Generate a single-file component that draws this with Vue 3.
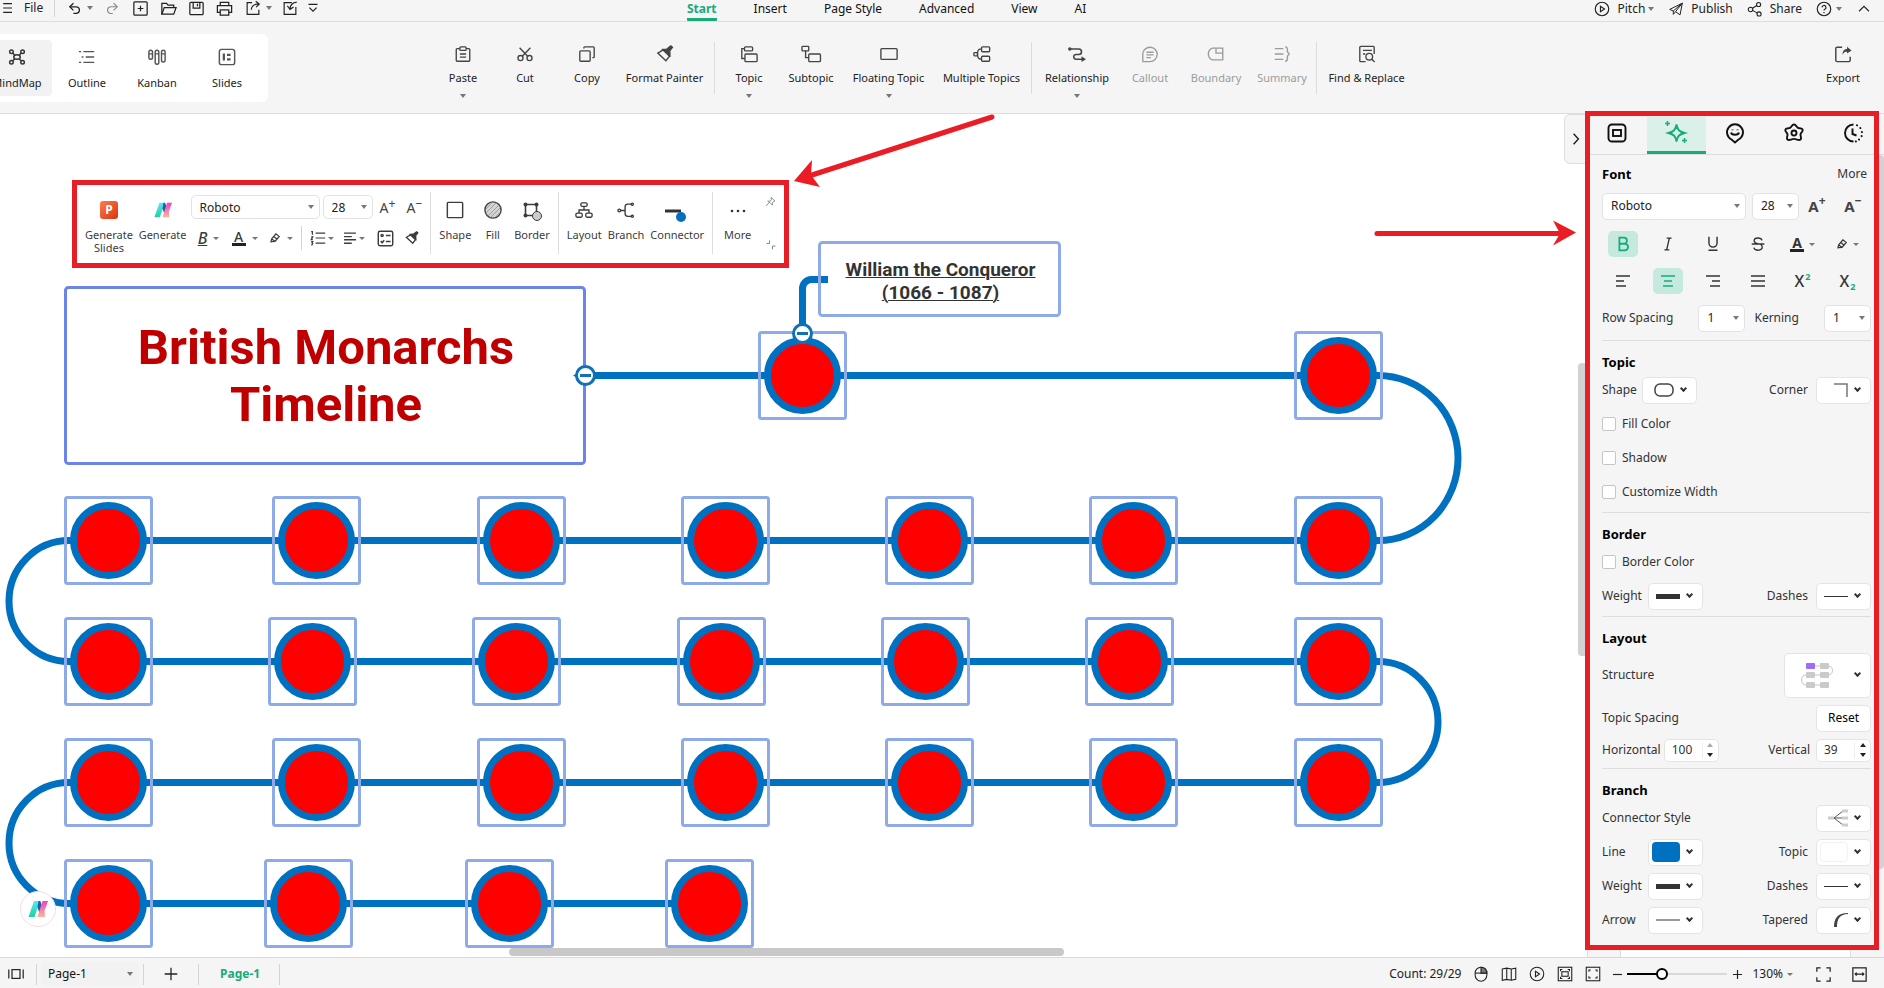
<script setup>
import { h, ref } from 'vue'

const shapes = {
  menu: '<path d="M4 4.500h11M4 10h11M4 15.500h11"/>',
  undo: '<path d="M8 4L3.500 8.500L8 13"/><path d="M3.500 8.500h8.500a4.200 4.200 0 0 1 0 8.300h-4"/>',
  redo: '<path d="M12 4L16.500 8.500L12 13"/><path d="M16.500 8.500H8a4.200 4.200 0 0 0 0 8.300h3"/>',
  plusBox: '<rect x="3" y="3" width="14" height="14" rx="1"/><path d="M10 7v6M7 10h6"/>',
  folder: '<path d="M3 16V4.500h5l1.500 2h6V9"/><path d="M3 16L5.500 9H18l-2.500 7z"/>',
  save: '<rect x="3" y="3.500" width="14" height="13" rx="1"/><path d="M6.500 3.500v6h7v-6M11 5v2.500"/>',
  print: '<path d="M5.500 7V3.500h9V7M5.500 14H2.500V7h15v7h-3"/><rect x="5.500" y="11.500" width="9" height="5.500"/>',
  shareBox: '<path d="M9 4H3.500v13h13v-5"/><path d="M8 12c.5-4.500 3-6.500 8.500-6.500M13 2.500l4 3-3.500 3.500"/>',
  importBox: '<path d="M12 4H3.500v13h13V9"/><path d="M17.500 3.500c-4.500.5-7 3-7.500 7M7 7.500l3 4 4-2.500"/>',
  customize: '<path d="M5 6h10M6 9.500l4 4 4-4"/>',
  play: '<circle cx="10" cy="10" r="7.500"/><path d="M8.300 7v6l4.500-3z"/>',
  plane: '<path d="M3 10.500L17 3.500l-2.500 13-5-3.500-2.500 3V12.200zM7 12.200L17 3.500l-7.500 9.500"/>',
  shareNodes: '<circle cx="5" cy="10.500" r="2.500"/><circle cx="14" cy="5" r="2.300"/><circle cx="14.500" cy="15.500" r="2.300"/><path d="M7.200 9.200L12 6.200M7.300 11.500l5 2.800"/>',
  help: '<circle cx="10" cy="10" r="7.500"/><path d="M7.800 8.200a2.200 2.200 0 1 1 3.200 2c-.8.400-1 .8-1 1.600M10 13.300v1.300"/>',
  up: '<path d="M4.500 12.500L10 7l5.500 5.500"/>',
  right: '<path d="M7 3.500l6 6.500-6 6.500"/>',
  mindmap: '<ellipse cx="10" cy="10" rx="3.600" ry="2.600"/><circle cx="3.800" cy="4.200" r="2"/><circle cx="16.200" cy="4.200" r="2"/><circle cx="3.800" cy="15.800" r="2"/><circle cx="16.200" cy="15.800" r="2"/><path d="M5.200 5.600L7.500 8M14.800 5.600L12.500 8M5.200 14.400L7.500 12M14.800 14.400L12.500 12"/>',
  outline: '<path d="M1 4h2.500M6 4h12M4 10h2M8.500 10H18M1 16h2.500M6 16h12"/>',
  kanban: '<rect x="1" y="2.500" width="4" height="10" rx="2"/><rect x="8" y="2.500" width="4" height="15.500" rx="2"/><rect x="15" y="2.500" width="4" height="13" rx="2"/><path d="M1 6.500h4M8 6.500h4M15 6.500h4"/>',
  slides: '<rect x="1.500" y="1.500" width="17" height="17" rx="2.500"/><path d="M6.500 6v8M10 7.500h4M10 12.500h4" stroke-width="2.500"/>',
  paste: '<path d="M6.500 4H3.500a1 1 0 0 0-1 1v12a1 1 0 0 0 1 1h13a1 1 0 0 0 1-1V5a1 1 0 0 0-1-1h-3"/><rect x="6.500" y="2" width="7" height="4" rx="1"/><path d="M6.500 10h7M6.500 13.500h7"/>',
  cut: '<circle cx="5" cy="14.500" r="2.800"/><circle cx="15" cy="14.500" r="2.800"/><path d="M7 12.500L16 3M13 12.500L4 3"/>',
  copy: '<rect x="2" y="6.500" width="11.500" height="11.500" rx="1"/><path d="M6.500 4V3a1 1 0 0 1 1-1h9.500a1 1 0 0 1 1 1v10a1 1 0 0 1-1 1h-1"/>',
  painter: '<path d="M8 5.500L2 9l9 8.500 4-5z"/><path d="M7.500 5L12 4.500l4.500-3.500 1.800 1.600-3 4L15.500 12z" fill="currentColor"/>',
  topic: '<rect x="5" y="2" width="9" height="4.500" rx="1"/><rect x="5.500" y="10" width="13.500" height="8.500" rx="1"/><path d="M5 4H2v11h3.500"/>',
  subtopic: '<rect x="0" y="1.500" width="7.500" height="5" rx=".8"/><rect x="7.500" y="10" width="13" height="8.500" rx="1"/><path d="M4 6.500V14h3.500"/>',
  floating: '<rect x="1" y="4" width="18" height="12" rx="1"/>',
  multi: '<rect x="9.500" y="2" width="9" height="5.500" rx="1"/><rect x="9.500" y="12.500" width="9" height="5.500" rx="1"/><rect x="1" y="8.500" width="4" height="3.500" rx=".8"/><path d="M9.500 4.500H8c-1.500 0-3 2-3 5.500s1.500 5.500 3 5.500h1.500"/>',
  relation: '<path d="M1.500 4.500H12a3 3 0 0 1 0 6H8.500a2.700 2.700 0 0 0 0 5.300H16" stroke-width="1.800"/><circle cx="2" cy="4.500" r="1.900" fill="currentColor" stroke="none"/><path d="M15 12.500L20 15.800L15 19z" fill="currentColor" stroke="none"/>',
  callout: '<path d="M2 18.500V10a8 8 0 1 1 8 8.500z"/><path d="M6 8h8M6 11h8M6 14h5"/>',
  boundary: '<path d="M6 3.500h11.500v13H6C3 15.500 1.500 13 1.500 10S3 4.500 6 3.500z"/><path d="M10 3.500v5.500h7.500"/>',
  summary: '<path d="M2 4h9.500M2 10h9.500M2 16h9.500M13.500 2c2 0 2.500 1 2.500 3v2.500L18 10l-2 2.500V15c0 2-.5 3-2.500 3"/>',
  find: '<path d="M8.500 18.500H3a1 1 0 0 1-1-1V2.500a1 1 0 0 1 1-1h14a1 1 0 0 1 1 1V10M5.500 6h10M5.500 10H8"/><circle cx="12.500" cy="13" r="3.700"/><path d="M15.300 15.800L18.500 19"/>',
  export: '<path d="M9 2.500H3.500a1.500 1.500 0 0 0-1.500 1.500v13a1.500 1.500 0 0 0 1.500 1.500h13a1.500 1.500 0 0 0 1.500-1.500v-4"/><path d="M9.500 11c0-5 2.500-6.500 5-6.500V2l5 4-5 3.500V7.500c-2 0-4 .5-5 3.500z" fill="currentColor" stroke="none"/>',
  tabFrame: '<rect x="1.500" y="1.500" width="17" height="17" rx="3.500"/><rect x="6" y="7" width="8" height="6"/>',
  tabStyle: '<path d="M10.500 1.500c1 5.500 2.500 7 8 8.500-5.500 1.500-7 3-8 8.500-1-5.500-2.500-7-8-8.500 5.500-1.500 7-3 8-8.500z"/><path d="M1.500-2v5M-1 .5h5M18.500 15v5M16 17.500h5" stroke-width="1.500"/>',
  tabFace: '<path d="M10 19.500L6.500 16.500a8 8 0 1 1 7 0z"/><path d="M6 9.500c.5 3 7.500 3 8 0M7.500 6.500v.8M12.500 6.500v.8"/>',
  tabFlower: '<path d="M10 1.500c2.200 0 2.300 2.500 4 3.300 1.500.7 4.200 0 4.700 2 .5 1.900-2 2.700-2.200 4.500-.2 2 1.500 3.900 0 5.200-1.700 1.500-3.700-.6-6.500-.6s-4.800 2.100-6.500.6c-1.500-1.300.2-3.200 0-5.200-.2-1.800-2.700-2.600-2.200-4.500.5-2 3.200-1.300 4.700-2 1.700-.8 1.800-3.300 4-3.300z"/><circle cx="10" cy="10" r="2.500"/>',
  tabClock: '<path d="M10.500 1.500a8.500 8.500 0 0 0 0 17M9.500 5.500V11l4 1.500"/><path d="M14 2.300l.1.100M17.300 5l.1.100M18.900 9l.1.100M18.600 13l.1.100M16 16.500l.1.100M12.800 18.400l.1.100" stroke-linecap="round" stroke-width="2"/>',
  pen: '<path d="M3 17.500l1.500-6L11.500 3l5.500 4.500-7 8-5.500.5M4.500 11.500l5.500 4M8 7.500l5.500 4.500"/>',
  numList: '<path d="M7 4h12M7 10h12M7 16.500h12"/><path d="M1.500 2H3v4M1.500 8.500h2l-2 3.500h2M1.500 14.500h2l-1 1.500 1 1-1 1.500h-1"/>',
  left: '<path d="M1.500 3h17M1.500 8h11M1.500 12.500h17M1.500 17.500h11"/>',
  checklist: '<rect x="1.500" y="1.500" width="17" height="17" rx="2"/><path d="M10.500 6.500H16M10.500 13.500H16M4.500 13l1.500 2 2.500-3"/><circle cx="6" cy="6.500" r="1.300"/>',
  square: '<rect x="1.500" y="1.500" width="17" height="17" rx="1"/>',
  fill: '<circle cx="10" cy="10" r="9" fill="#d5d5d5"/><path d="M2 9L9 1.500M1.500 14L14 1.500M4 17L17 4M7 18.500L18.500 7M12 18.500L18.500 12" stroke="#888" stroke-width=".8"/>',
  layout: '<rect x="6.500" y="2" width="7" height="4" rx="1.500"/><rect x="1" y="13.500" width="7" height="4.500" rx="1.500"/><rect x="12" y="13.500" width="7" height="4.500" rx="1.500"/><path d="M10 6v4M4.500 13.500V10h11v3.500"/>',
  branch: '<path d="M4 10.500h5M16 3.500h-4a3 3 0 0 0-3 3v7.500a3 3 0 0 0 3 3h4"/><circle cx="2.500" cy="10.500" r="1.500"/><circle cx="17" cy="3.500" r="1.200"/><circle cx="17" cy="17" r="1.200"/>',
  pin: '<path d="M11 2.500l7 6.500-2 .5-2.500 3v4L9.500 13 5 9.500h4.500l2-3zM7.500 12L2 18"/>',
  collapse: '<path d="M1 7h6V1M19 12h-6v7"/>',
  pages: '<rect x="5" y="4.500" width="10" height="11"/><path d="M1 4.500v11M19 4.500v11"/>',
  plus: '<path d="M10 3v14M3 10h14"/>',
  minus: '<path d="M3 10h14"/>',
  mouse: '<rect x="3.500" y="2.500" width="13" height="15.500" rx="6.500"/><path d="M3.500 9h13"/><path d="M10 2.500V9h6.500c0-4-2.500-6.500-6.500-6.500z" fill="#777"/>',
  map: '<path d="M2.500 4.500l5-1 5 1 5-1V16l-5 1-5-1-5 1zM7.500 3.500V16M12.500 4.500V17"/>',
  fit: '<rect x="2.500" y="2.500" width="15" height="15"/><rect x="6.500" y="7.500" width="7" height="5"/><path d="M5 7V5h2M13 5h2v2M15 13v2h-2M7 15H5v-2"/>',
  full: '<rect x="2.500" y="2.500" width="15" height="15"/><path d="M5.500 7.500v-2h2M12.500 5.500h2v2M14.500 12.500v2h-2M7.500 14.500h-2v-2"/>',
  fullscreen: '<path d="M3 7V3h4M13 3h4v4M17 13v4h-4M7 17H3v-4"/>',
  fitWidth: '<rect x="3" y="3" width="14" height="14"/><path d="M5.500 9.500h9M7 8L5.500 9.500 7 11M13 8l1.500 1.500L13 11"/>',
  alignL: '<path d="M3 5h14M3 10h8M3 15h10"/>',
  alignC: '<path d="M3 5h14M6 10h8M5 15h10"/>',
  alignR: '<path d="M3 5h14M9 10h8M7 15h10"/>',
  alignJ: '<path d="M3 5h14M3 10h14M3 15h14"/>',
  strike: '<path d="M3 10h14M14.500 6c-.5-2-2-2.700-4.500-2.700S5.700 4.500 5.700 6.300 7 9 10 10M5.300 14c.5 2 2 2.900 4.700 2.900s4.700-1.200 4.700-3.500c0-1.400-.7-2.500-2-3.400"/>',
  italic: '<path d="M8.500 3.500H14M6 16.500h5.500M11.500 3.500l-3 13"/>',
  under: '<path d="M5.500 2v7a4.500 4.500 0 0 0 9 0V2M5 17h10"/>',
  bold: '<path d="M6 3h5a3.300 3.300 0 0 1 0 6.700H6zM6 9.700h6a3.600 3.600 0 0 1 0 7.300H6z"/>'
}
const Icon = (p) => h('svg', {
  viewBox: '0 0 20 20', width: p.size || 20, height: p.size || 20, fill: 'none',
  stroke: 'currentColor', 'stroke-width': p.weight || 1.3, 'aria-hidden': 'true',
  style: { overflow: 'visible' }, innerHTML: shapes[p.name]
})
Icon.props = ['name', 'size', 'weight']

const logo = '<defs><linearGradient id="lg-a" x1="0" y1="0" x2="0" y2="1"><stop offset="0" stop-color="#5fe3f5"/><stop offset="1" stop-color="#1cd3a2"/></linearGradient><linearGradient id="lg-b" x1="0" y1="0" x2="0" y2="1"><stop offset="0" stop-color="#f23fc0"/><stop offset="1" stop-color="#fdb49a"/></linearGradient></defs><path d="M6 2h6L6.500 18H.5z" fill="url(#lg-a)"/><path d="M10.500 2h1.800l2.200 6-2.500 8-2.500-8z" fill="#1b62a5"/><path d="M14.500 2H20l-3.500 10 .5 6H9.500z" fill="url(#lg-b)"/>'
const Logo = (p) => h('svg', { viewBox: '0 0 20 20', width: p.size, height: p.size, 'aria-hidden': 'true', innerHTML: logo })
Logo.props = ['size']

const menus = ['Start', 'Insert', 'Page Style', 'Advanced', 'View', 'AI']
const files = ['plusBox', 'folder', 'save', 'print']
const views = [['MindMap', 'mindmap'], ['Outline', 'outline'], ['Kanban', 'kanban'], ['Slides', 'slides']]
const ribbon = [
  [['Paste', 'paste', 'w1', 1], ['Cut', 'cut', 'w1'], ['Copy', 'copy', 'w1'], ['Format Painter', 'painter', 'w4']],
  [['Topic', 'topic', 'w1', 1], ['Subtopic', 'subtopic', 'w1'], ['Floating Topic', 'floating', 'w4', 1], ['Multiple Topics', 'multi', 'w4']],
  [['Relationship', 'relation', 'w3', 1], ['Callout', 'callout', 'w1', 0, 1], ['Boundary', 'boundary', 'w2', 0, 1], ['Summary', 'summary', 'w1', 0, 1]],
  [['Find & Replace', 'find', 'w4']]
]
const panelTabs = [['Page', 'tabFrame'], ['Style', 'tabStyle'], ['Icons', 'tabFace'], ['Clipart', 'tabFlower'], ['History', 'tabClock']]
const rows = [
  { y: 261.5, xs: [802.5, 1338.5] },
  { y: 426.5, xs: [108.5, 316.5, 521.5, 725.5, 929.5, 1133.5, 1338.5] },
  { y: 547.5, xs: [108.5, 312.5, 516.5, 721.5, 925.5, 1129.5, 1338.5] },
  { y: 668.5, xs: [108.5, 316.5, 521.5, 725.5, 929.5, 1133.5, 1338.5] },
  { y: 789.5, xs: [108.5, 308.5, 509.5, 709.5] }
]
const font = ref('Roboto')
const size = ref('28')
const zoom = ref(33)
</script>

<template>
  <div class="app">
    <header class="titlebar">
      <div class="title-left">
        <button class="plain file"><Icon name="menu" size="16" weight="1.5" /><span>File</span></button>
        <i class="vline" />
        <button class="plain undo first" aria-label="Undo"><Icon name="undo" size="16" weight="1.6" /><i class="tri" /></button>
        <button class="plain cell dim" aria-label="Redo"><Icon name="redo" size="16" weight="1.4" /></button>
        <button v-for="f in files" :key="f" class="plain cell" :aria-label="f"><Icon :name="f" size="19" /></button>
        <button class="plain undo" aria-label="Share file"><Icon name="shareBox" size="18" /><i class="tri" /></button>
        <button class="plain cell" aria-label="Import"><Icon name="importBox" size="18" /></button>
        <button class="plain" aria-label="Customize"><Icon name="customize" size="18" /></button>
      </div>
      <nav class="menus">
        <a v-for="(m, i) in menus" :key="m" href="#" :class="{ on: i === 0 }">{{ m }}</a>
      </nav>
      <div class="title-right">
        <button class="plain"><Icon name="play" size="18" /><span>Pitch</span><i class="tri" /></button>
        <button class="plain"><Icon name="plane" size="18" weight="1.1" /><span>Publish</span></button>
        <button class="plain"><Icon name="shareNodes" size="18" weight="1.2" /><span>Share</span></button>
        <button class="plain" aria-label="Help"><Icon name="help" size="18" /><i class="tri" /></button>
        <button class="plain" aria-label="Collapse ribbon"><Icon name="up" size="18" weight="1.2" /></button>
      </div>
    </header>

    <section class="ribbon">
      <div class="views">
        <button v-for="(v, i) in views" :key="v[0]" class="plain view" :class="{ on: i === 0 }">
          <Icon :name="v[1]" size="18" weight="1.6" /><span>{{ v[0] }}</span>
        </button>
      </div>
      <div class="tools">
        <div v-for="(g, i) in ribbon" :key="i" class="group">
          <button v-for="t in g" :key="t[0]" class="plain tool" :class="t[2]" :disabled="!!t[4]">
            <Icon :name="t[1]" size="18" weight="1.5" /><span>{{ t[0] }}</span><i v-if="t[3]" class="tri" />
          </button>
        </div>
      </div>
      <button class="plain tool w1 export"><Icon name="export" size="18" weight="1.6" /><span>Export</span></button>
    </section>

    <div class="work">
      <main class="canvas">
        <svg class="map" fill="none" aria-label="British Monarchs Timeline">
          <g stroke="#0070c0" stroke-width="7">
            <path d="M585 261.500H1378A80 82.500 0 0 1 1378 426.500H69A60 60.500 0 0 0 69 547.500H1378A60 60.500 0 0 1 1378 668.500H69A60 60.500 0 0 0 69 789.500H709" />
            <path d="M802.500 214V175a9 9 0 0 1 9-9.500H828" />
            <path d="M573 261.500l7-4v8z" fill="#0070c0" stroke="none" />
          </g>
          <g v-for="r in rows" :key="r.y">
            <g v-for="x in r.xs" :key="x">
              <circle :cx="x" :cy="r.y" r="35" fill="#f00" stroke="#0070c0" stroke-width="7" />
              <rect :x="x - 43" :y="r.y - 43" width="86" height="86" rx="2" stroke="#8faae8" stroke-width="3" />
            </g>
          </g>
          <rect x="65.500" y="173.500" width="519" height="176" rx="3" stroke="#6c83ea" stroke-width="3" />
          <rect x="819.500" y="128.500" width="240" height="73" rx="3" stroke="#8faae8" stroke-width="3" />
          <g fill="#fff" stroke="#1171b4" stroke-width="3">
            <circle cx="802.500" cy="219.500" r="9" /><path d="M797 219.500h11" />
            <circle cx="585.500" cy="261.500" r="9" /><path d="M580 261.500h11" />
          </g>
          <g stroke="#ec1c24" stroke-width="5" stroke-linecap="round">
            <path d="M992 3L812 61M1377 119.500H1562" />
            <path d="M794 67l18-21-1 15 9 12z" fill="#ec1c24" stroke="none" />
            <path d="M1576 118.500l-23-12 7 13-7 12z" fill="#ec1c24" stroke="none" />
          </g>
        </svg>
        <h1 class="node-title">British Monarchs<br>Timeline</h1>
        <p class="node-sub">William the Conqueror<br>(1066 - 1087)</p>
        <button class="ai" aria-label="AI assistant"><Logo size="20" /></button>

        <div class="floatbar">
          <div class="fb-gen">
            <button class="plain fb"><span class="ppt">P</span><span>Generate<br>Slides</span></button>
            <button class="plain fb"><Logo size="22" /><span>Generate</span></button>
          </div>
          <div class="fb-text">
            <div class="fb-row">
              <span class="pick fam"><select v-model="font" aria-label="Font family"><option>Roboto</option></select></span>
              <span class="pick num"><select v-model="size" aria-label="Font size"><option>28</option></select></span>
              <button class="plain glyph" aria-label="Increase font">A<sup>+</sup></button>
              <button class="plain glyph" aria-label="Decrease font">A<sup>−</sup></button>
            </div>
            <div class="fb-row tight">
              <button class="plain drop" aria-label="Bold"><span class="b">B</span><i class="tri s" /></button>
              <button class="plain drop" aria-label="Font color"><span class="bar">A</span><i class="tri s" /></button>
              <button class="plain drop" aria-label="Highlight"><Icon name="pen" size="12" weight="2" /><i class="tri s" /></button>
              <i class="vline mid" />
              <button class="plain drop list" aria-label="Numbering"><Icon name="numList" size="16" weight="1.5" /><i class="tri s" /></button>
              <button class="plain drop list" aria-label="Align"><Icon name="left" size="14" weight="2" /><i class="tri s" /></button>
              <button class="plain one" aria-label="Checklist"><Icon name="checklist" size="17" weight="1.7" /></button>
              <button class="plain one" aria-label="Format painter"><Icon name="painter" size="14" weight="1.8" /></button>
            </div>
          </div>
          <div class="fb-group">
            <button class="plain fb"><Icon name="square" size="18" weight="1.6" /><span>Shape</span></button>
            <button class="plain fb"><Icon name="fill" size="18" weight="1.5" /><span>Fill</span></button>
            <button class="plain fb">
              <svg width="20" height="20" fill="none" stroke="#3c3c3c" stroke-width="1.600" aria-hidden="true"><path d="M3.500 3.500h11v11h-11z" /><g fill="#3c3c3c" stroke="none"><circle cx="3.500" cy="3.500" r="2" /><circle cx="14.500" cy="3.500" r="2" /><circle cx="3.500" cy="14.500" r="2" /></g><circle cx="15" cy="15" r="4.500" fill="#ccc" stroke-width="1" /></svg>
              <span>Border</span></button>
          </div>
          <div class="fb-group three">
            <button class="plain fb"><Icon name="layout" size="18" weight="1.5" /><span>Layout</span></button>
            <button class="plain fb"><Icon name="branch" size="18" weight="1.5" /><span>Branch</span></button>
            <button class="plain fb">
              <svg width="20" height="20" aria-hidden="true"><path d="M-2 10h16" stroke="#333" stroke-width="3" /><circle cx="14" cy="16" r="5" fill="#0070c0" /></svg>
              <span>Connector</span></button>
          </div>
          <div class="fb-group last"><button class="plain fb"><svg width="18" height="18" fill="#333" aria-hidden="true"><circle cx="3" cy="10" r="1.300" /><circle cx="9" cy="10" r="1.300" /><circle cx="15" cy="10" r="1.300" /></svg><span>More</span></button></div>
          <div class="fb-side">
            <button class="plain" aria-label="Pin"><Icon name="pin" size="11" weight="1.7" /></button>
            <button class="plain" aria-label="Collapse"><Icon name="collapse" size="10" weight="2" /></button>
          </div>
        </div>

        <i class="sb-v" /><i class="sb-h" />
        <button class="plain fold" aria-label="Hide panel"><Icon name="right" size="16" weight="1.8" /></button>
      </main>

      <aside class="panel">
        <div class="ptabs" role="tablist">
          <button v-for="(t, i) in panelTabs" :key="t[0]" class="plain ptab" role="tab" :aria-label="t[0]" :class="{ on: i === 1 }"><Icon :name="t[1]" size="20" weight="1.9" /></button>
        </div>

        <section class="sec fontsec">
          <div class="line"><h2>Font</h2><a href="#" class="right more">More</a></div>
          <div class="line fonts">
            <span class="pick grow"><select v-model="font" aria-label="Font"><option>Roboto</option></select></span>
            <span class="pick n47 gap6"><select v-model="size" aria-label="Size"><option>28</option></select></span>
            <button class="plain glyph heavy" aria-label="Larger">A<sup>+</sup></button>
            <button class="plain glyph heavy" aria-label="Smaller">A<sup>−</sup></button>
          </div>
          <div class="fmt">
            <button class="plain on" aria-label="Bold"><Icon name="bold" size="18" weight="2" /></button>
            <button class="plain" aria-label="Italic"><Icon name="italic" size="18" weight="1.5" /></button>
            <button class="plain" aria-label="Underline"><Icon name="under" size="18" weight="1.600" /></button>
            <button class="plain" aria-label="Strikethrough"><Icon name="strike" size="18" weight="1.500" /></button>
            <button class="plain" aria-label="Text color"><span class="bar bold">A</span><i class="tri s" /></button>
            <button class="plain" aria-label="Highlight"><Icon name="pen" size="12" weight="2" /><i class="tri s" /></button>
            <button class="plain" aria-label="Left"><Icon name="alignL" size="20" weight="1.6" /></button>
            <button class="plain on" aria-label="Center"><Icon name="alignC" size="20" weight="1.6" /></button>
            <button class="plain" aria-label="Right"><Icon name="alignR" size="20" weight="1.6" /></button>
            <button class="plain" aria-label="Justify"><Icon name="alignJ" size="20" weight="1.6" /></button>
            <button class="plain x" aria-label="Superscript">X<sup>2</sup></button>
            <button class="plain x" aria-label="Subscript">X<sub>2</sub></button>
          </div>
          <div class="line">
            <label for="rs">Row Spacing</label><span class="pick n47 right"><select id="rs"><option>1</option></select></span>
            <label for="kn" class="kern">Kerning</label><span class="pick n47"><select id="kn"><option>1</option></select></span>
          </div>
        </section>

        <section class="sec">
          <h2>Topic</h2>
          <div class="line">
            <span class="lab narrow">Shape</span><button class="box" aria-label="Shape"><svg width="20" height="14" fill="none" stroke="#444" stroke-width="1.500"><rect x="1" y="1" width="18" height="12" rx="5" /></svg><i class="chev" /></button>
            <span class="right">Corner</span><button class="box" aria-label="Corner"><svg width="14" height="14" fill="none" stroke="#777" stroke-width="1.500"><path d="M0 1h13v13" /></svg><i class="chev" /></button>
          </div>
          <label class="line check"><input type="checkbox">Fill Color</label>
          <label class="line check"><input type="checkbox">Shadow</label>
          <label class="line check"><input type="checkbox">Customize Width</label>
        </section>

        <section class="sec">
          <h2>Border</h2>
          <label class="line check"><input type="checkbox">Border Color</label>
          <div class="line">
            <span class="lab">Weight</span><button class="box" aria-label="Border weight"><i class="stroke thick" /><i class="chev" /></button>
            <span class="right">Dashes</span><button class="box" aria-label="Border dashes"><i class="stroke" /><i class="chev" /></button>
          </div>
        </section>

        <section class="sec">
          <h2>Layout</h2>
          <div class="line tall">
            <span>Structure</span>
            <button class="box big right" aria-label="Structure">
              <svg width="34" height="26" fill="none" stroke="#c4c4c4"><path d="M5 4h22c6 0 6 9 0 9H5c-6 0-6 10 0 10h22" /><g fill="#cacaca" stroke="none"><rect x="19" y="1" width="9" height="6" rx="1" /><rect x="5" y="10" width="9" height="6" rx="1" /><rect x="19" y="10" width="9" height="6" rx="1" /><rect x="5" y="20" width="9" height="6" rx="1" /><rect x="19" y="20" width="9" height="6" rx="1" /><rect x="5" y="1" width="9" height="6" rx="1" fill="#a06cf5" /></g></svg>
              <i class="chev" />
            </button>
          </div>
          <div class="line"><span>Topic Spacing</span><button class="box reset right">Reset</button></div>
          <div class="line short">
            <label for="hs">Horizontal</label><span class="spin near"><input id="hs" value="100"><span class="ar"><i class="upa off" /><i class="tri k" /></span></span>
            <label for="vs" class="right">Vertical</label><span class="spin"><input id="vs" value="39"><span class="ar"><i class="upa" /><i class="tri k" /></span></span>
          </div>
        </section>

        <section class="sec last">
          <h2>Branch</h2>
          <div class="line"><span>Connector Style</span><button class="box right" aria-label="Connector style"><svg width="20" height="18" fill="none" stroke="#555"><path d="M3 9h12M6 9l9-7M6 9l9 7" /><path d="M0 9h6M14 2h6M14 9h6M14 16h6" stroke="#ccc" stroke-width="3" /></svg><i class="chev" /></button></div>
          <div class="line">
            <span class="lab">Line</span><button class="box sw" aria-label="Line color"><i class="swatch" /><i class="chev" /></button>
            <span class="right">Topic</span><button class="box sw" aria-label="Topic color"><i class="swatch none" /><i class="chev" /></button>
          </div>
          <div class="line">
            <span class="lab">Weight</span><button class="box" aria-label="Branch weight"><i class="stroke thick" /><i class="chev" /></button>
            <span class="right">Dashes</span><button class="box" aria-label="Branch dashes"><i class="stroke" /><i class="chev" /></button>
          </div>
          <div class="line">
            <span class="lab">Arrow</span><button class="box" aria-label="Arrow"><i class="stroke pale" /><i class="chev" /></button>
            <span class="right">Tapered</span><button class="box" aria-label="Tapered"><svg width="14" height="14"><path d="M0 14C0 6 3 0 14 0v1C6 1 3 6 3 14z" fill="#444" /></svg><i class="chev" /></button>
          </div>
        </section>
        <div class="nextcard" />
        <i class="pscroll" />
        <i class="mark" />
      </aside>
    </div>

    <footer class="status">
      <button class="plain pg" aria-label="Pages"><Icon name="pages" size="16" weight="1.500" /></button>
      <i class="vline" />
      <span class="pick page"><select aria-label="Page"><option>Page-1</option></select></span>
      <i class="vline" />
      <button class="plain add" aria-label="Add page"><Icon name="plus" size="18" weight="1.400" /></button>
      <i class="vline" />
      <a href="#" class="ptag">Page-1</a>
      <i class="vline" />
      <div class="status-right">
        <span class="count">Count: 29/29</span>
        <button v-for="s in ['mouse', 'map', 'play', 'fit', 'full']" :key="s" class="plain cell" :aria-label="s"><Icon :name="s" size="18" weight="1.2" /></button>
        <button class="plain sm" aria-label="Zoom out"><Icon name="minus" size="13" weight="1.8" /></button>
        <input v-model="zoom" class="slider" type="range" min="0" max="100" aria-label="Zoom">
        <button class="plain sm" aria-label="Zoom in"><Icon name="plus" size="13" weight="1.8" /></button>
        <button class="plain pct">130%<i class="tri s" /></button>
        <button class="plain wide" aria-label="Full screen"><Icon name="fullscreen" size="19" weight="1.3" /></button>
        <button class="plain wide" aria-label="Fit width"><Icon name="fitWidth" size="19" weight="1.3" /></button>
      </div>
    </footer>
  </div>
</template>

<style>
body { overflow: hidden; }
</style>

<style scoped>
* { box-sizing: border-box; }
.app { height: 100vh; display: flex; flex-direction: column; background: #f5f5f5; color: #222; font: 12px/16px "Noto Sans", "Open Sans", sans-serif; }
button, select, input { font: inherit; color: inherit; }
a { color: inherit; text-decoration: none; }
i { font-style: normal; }
svg { flex: none; display: block; }
.plain { border: 0; padding: 0; background: none; display: flex; align-items: center; justify-content: center; white-space: nowrap; }
.tri { flex: none; width: 0; height: 0; border: 3px solid transparent; border-top: 4px solid #777; border-bottom: 0; }
.tri.k { border-top-color: #222; }
.vline { flex: none; width: 1px; height: 18px; background: #d4d4d4; }
.cell { width: 28px; }
.dim { color: #888; }

.titlebar { flex: none; height: 22px; display: flex; border-bottom: 1px solid #ddd; }
.title-left { width: 687px; height: 16px; display: flex; align-items: center; }
.file { width: 54px; gap: 8px; justify-content: flex-start; }
.undo { width: 38px; padding-left: 6px; gap: 4px; justify-content: flex-start; }
.undo.first { margin-left: 5px; padding-left: 7px; }
.menus { display: flex; gap: 37px; height: 21px; }
.menus a { color: #111; padding-top: 1px; }
.menus .on { color: #17ab7b; font-weight: 700; border-bottom: 3px solid #17ab7b; border-radius: 1px; }
.title-right { margin-left: auto; height: 18px; display: flex; align-items: center; gap: 13px; padding-right: 11px; }
.title-right .plain { gap: 6px; }
.title-right .tri { margin-left: -3px; }

.ribbon { flex: none; height: 92px; display: flex; border-bottom: 1px solid #ddd; font-size: 11px; }
.views { width: 268px; height: 68px; margin-top: 12px; background: #fff; border-radius: 0 6px 6px 0; display: flex; align-items: center; }
.view { flex-direction: column; width: 70px; height: 56px; gap: 9px; padding-top: 3px; border-radius: 4px; }
.view.on { background: #f2f2f2; margin-left: -18px; }
.view svg { color: #555; }
.view.on svg { color: #333; }
.tools { display: flex; margin-left: 164px; }
.group { display: flex; }
.group + .group { border-left: 1px solid #dcdcdc; margin: 20px 0 19px 3px; padding-left: 3px; }
.group + .group .tool { margin: -20px 0 -19px; }
.tool { flex-direction: column; justify-content: flex-start; padding-top: 23px; gap: 7px; color: #222; }
.tool svg { color: #444; }
.tool .tri { margin-top: 1px; }
.tool:disabled, .tool:disabled svg { color: #9b9b9b; }
.w1 { width: 62px; } .w2 { width: 70px; } .w3 { width: 84px; } .w4 { width: 93px; }
.export { margin-left: auto; margin-right: 10px; }

.work { flex: 1; min-height: 0; display: flex; }
.canvas { position: relative; flex: 1; min-width: 0; background: #fff; overflow: hidden; }
.map { position: absolute; inset: 0; width: 100%; height: 100%; }
.node-title { position: absolute; left: 64px; top: 172px; width: 524px; height: 178px; margin: 0; padding-top: 33px; text-align: center; color: #c00000; font: 700 49px/57px Roboto, sans-serif; }
.node-sub { position: absolute; left: 819px; top: 127px; width: 243px; margin: 0; padding-top: 17px; text-align: center; color: #333; font: 700 19px/23px Roboto, sans-serif; text-decoration: underline; text-decoration-thickness: 1px; }
.ai { position: absolute; left: 20px; top: 777px; width: 36px; height: 36px; padding: 0; border: 1px solid #f3dfe6; border-radius: 50%; background: #fff; display: flex; align-items: center; justify-content: center; }
.floatbar { position: absolute; left: 72px; top: 66px; width: 717px; height: 88px; border: 5px solid #e81e26; background: #fff; display: flex; padding: 7px 8px 9px; font-size: 11px; line-height: 13px; color: #3c3c3c; }
.fb-gen { display: flex; justify-content: space-between; width: 102px; margin-right: 4px; }
.fb { flex-direction: column; justify-content: flex-start; gap: 9px; padding-top: 9px; }
.fb svg { height: 18px; overflow: visible; }
.ppt { width: 18px; height: 18px; border-radius: 3px; background: linear-gradient(135deg, #ff7a4d, #d8360f); color: #fff; font: 700 12px/18px "Noto Sans", sans-serif; }
.fb-text { width: 241px; padding: 3px 0 0; display: flex; flex-direction: column; gap: 7px; }
.fb-row { display: flex; align-items: center; height: 24px; gap: 3px; }
.fb-row.tight { gap: 0; }
.fb-group { display: flex; justify-content: space-between; border-left: 1px solid #ddd; padding: 0 8px; width: 128px; }
.fb-group.three { width: 155px; }
.fb-group.last { width: 50px; justify-content: center; }
.fb-side { display: flex; flex-direction: column; justify-content: space-between; padding: 4px 0 4px 3px; color: #888; }
.pick { position: relative; display: flex; height: 24px; }
.pick::after { content: ""; position: absolute; right: 6px; top: 50%; margin-top: -2px; border: 3px solid transparent; border-top: 4px solid #777; border-bottom: 0; pointer-events: none; }
.pick select { appearance: none; width: 100%; border: 1px solid #e2e2e2; border-radius: 5px; background: #fff; padding: 0 8px; color: #222; font-size: 12px; }
.fam { width: 129px; } .num { width: 50px; }
.glyph { width: 24px; font-size: 14px; color: #444; align-items: center; }
.glyph sup { font-size: 12px; line-height: 8px; align-self: flex-start; margin-top: -1px; }
.heavy { width: 36px; font-weight: 700; font-size: 15px; }
.drop { width: 36px; gap: 6px; }
.drop.list { width: 32px; gap: 2px; }
.drop .b { font: italic 500 16px/16px "Noto Sans", sans-serif; text-decoration: underline; }
.bar { width: 14px; border-bottom: 3px solid #222; font: 500 14px/13px "Noto Sans", sans-serif; text-align: center; }
.bar.bold { font-weight: 700; }
.mid { margin: 0 4px 0 2px; height: 24px; }
.one { width: 26px; } .list + .one { margin-left: 3px; }
.tri.s { border-top-width: 3px; }
.sb-v { position: absolute; right: 0; top: 249px; width: 9px; height: 293px; border-radius: 4px; background: #d2d2d4; }
.sb-h { position: absolute; left: 509px; bottom: 1px; width: 555px; height: 8px; border-radius: 4px; background: #c8c8c8; }
.fold { position: absolute; right: 0; top: 0; width: 23px; height: 50px; border: 1px solid #ddd; border-radius: 6px 0 0 6px; background: #f5f5f5; }

.panel { position: relative; flex: none; width: 297px; background: #f5f5f5; display: flex; flex-direction: column; border-left: 1px solid #ddd; }
.ptabs { display: grid; grid-template-columns: repeat(5, 1fr); height: 41px; padding-right: 2px; border-bottom: 1px solid #ddd; }
.ptab { color: #111; padding-bottom: 2px; }
.ptab.on { color: #17ab7b; background: #dcf0ea; border-bottom: 3px solid #17ab7b; padding: 0; }
.sec { margin: 0 13px 0 14px; padding: 8px 0 7px; border-bottom: 1px solid #ddd; display: flex; flex-direction: column; gap: 7px; color: #333; }
.sec.last { border: 0; }
.sec > h2 { margin-bottom: -7px; }
h2 { margin: 0; height: 27px; font: 700 13px/27px "Noto Sans", sans-serif; color: #000; }
.line { display: flex; align-items: center; height: 27px; padding-top: 1px; }
.right { margin-left: auto; }
.more { padding-right: 4px; }
.fontsec { padding: 5px 0 9px; gap: 0; }
.fonts { margin: 5px 0 12px; }
.fonts .gap6 { margin-left: 6px; }
.fonts .glyph { width: 36px; }
.grow { flex: 1; } .n47 { width: 47px; }
.panel .pick { height: 27px; }
.kern { margin: 0 auto 0 9px; }
.fmt { display: grid; grid-template-columns: repeat(6, 1fr); row-gap: 11px; margin: 0 1px 10px -2px; }
.fmt .plain { width: 30px; height: 26px; margin: 0 auto; gap: 5px; border-radius: 5px; color: #333; }
.fmt .on { background: #c5e9de; color: #17ab7b; }
.x { font-size: 16px; font-weight: 500; }
.fmt .x { gap: 1px; }
.x sup, .x sub { font: 700 9px/9px "Noto Sans", sans-serif; color: #17ab7b; }
.x sup { margin-bottom: 10px; } .x sub { margin-top: 10px; }
.box { flex: none; width: 55px; height: 27px; margin-left: 8px; padding: 0 9px 0 7px; border: 1px solid #e4e4e4; border-radius: 5px; background: #fff; display: flex; align-items: center; justify-content: flex-end; gap: 7px; }
.chev { flex: none; width: 5px; height: 5px; margin: -3px 1px 0 0; border: solid #333; border-width: 0 2px 2px 0; transform: rotate(45deg); }
.check { gap: 6px; }
.check input { appearance: none; width: 14px; height: 14px; margin: 0; border: 1px solid #c6c6c6; border-radius: 2px; background: #fff; }
.lab { width: 38px; } .lab.narrow { width: 32px; }
.stroke { width: 24px; height: 1px; background: #333; }
.thick { height: 5px; } .pale { height: 2px; background: #999; }
.tall { height: 45px; }
.big { width: 87px; height: 45px; gap: 20px; }
.box.right { margin-left: auto; }
.reset { justify-content: center; color: #000; padding: 0; }
.short { height: 23px; }
.spin { width: 55px; height: 23px; margin-left: 6px; border: 1px solid #e4e4e4; border-radius: 5px; background: #fff; display: flex; align-items: center; }
.spin.near { margin-left: 3px; }
.spin input { width: 38px; height: 16px; padding: 0 0 0 7px; border: 0; border-right: 1px solid #eee; outline: 0; background: none; }
.ar { flex: 1; display: flex; flex-direction: column; align-items: center; gap: 6px; }
.upa { border: 3px solid transparent; border-bottom: 4px solid #222; border-top: 0; }
.upa.off { border-bottom-color: #aaa; }
.sw { padding-left: 3px; gap: 7px; }
.swatch { width: 28px; height: 20px; border-radius: 4px; background: #0070c0; }
.swatch.none { background: #fff; border: 1px solid #f2f2f2; }
.nextcard { flex: 1; margin: 6px 33px 0 32px; background: #fff; border: solid #ddd; border-width: 1px 1px 0; }
.pscroll { position: absolute; right: 0; top: 41px; width: 5px; height: 714px; border-radius: 0 4px 4px 0; background: #d4d1d2; }
.mark { position: absolute; left: -3px; right: 5px; top: -3px; bottom: 7px; border: 5px solid #e81e26; pointer-events: none; }

.status { flex: none; height: 31px; border-top: 1px solid #d8d8d8; display: flex; align-items: center; padding-top: 2px; }
.status > .vline { height: 21px; }
.pg { width: 36px; padding-right: 5px; }
.page { width: 98px; margin: 0 4px; }
.page select { border: 0; background: #f2f2f3; padding: 0 7px; color: #111; }
.add { width: 54px; }
.ptag { padding: 0 19px 0 21px; color: #17ab7b; font-weight: 700; }
.status-right { margin-left: auto; display: flex; align-items: center; padding-right: 7px; }
.count { margin-right: 6px; }
.sm { width: 20px; }
.slider { appearance: none; width: 100px; height: 15px; margin: 0; background: linear-gradient(#000, #000) 0 50% / 33% 2px no-repeat, linear-gradient(#d9d9d9, #d9d9d9) 0 50% / 100% 2px no-repeat; }
.slider::-webkit-slider-thumb { appearance: none; width: 12px; height: 12px; border: 2px solid #000; border-radius: 50%; background: #fff; }
.pct { margin-left: 5px; gap: 4px; }
.wide { width: 36px; }
.pct + .wide { margin-left: 12px; }
</style>
